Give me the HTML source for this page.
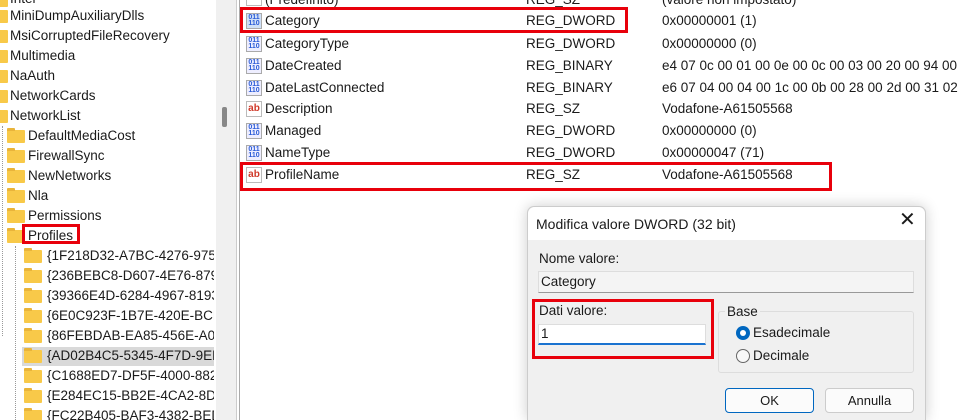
<!DOCTYPE html>
<html><head><style>
*{margin:0;padding:0;box-sizing:border-box}
html,body{width:980px;height:420px;overflow:hidden}
body{background:#fff;font-family:"Liberation Sans",sans-serif;font-size:13px;color:#1a1a1a;position:relative}
.a{position:absolute;white-space:nowrap}
.f{position:absolute;width:18px;height:13px;background:#f8c949;border-radius:1px}
.f:before{content:"";position:absolute;left:0;top:-2px;width:8px;height:3px;background:#e9b43a;border-radius:1px 1px 0 0}
.t{position:absolute;font-size:13.5px;white-space:nowrap;line-height:16px}
.rb{position:absolute;border:3px solid #e8000b;z-index:3}
.ic{position:absolute;width:16px;height:16px;border:1px solid #aaa;background:#eef;font-size:7px;line-height:6px;color:#2a5bd7;font-weight:bold;text-align:center;padding-top:1px}
.ab{position:absolute;width:16px;height:16px;border:1px solid #bbb;background:#fff;color:#d03a2a;font-size:10px;font-weight:bold;line-height:13px;text-align:center}
.sc{z-index:2}
</style></head><body>
<!-- tree pane -->
<div class="f" style="left:-10px;top:-6px"></div><div class="t" style="left:10px;top:-9px">Intel</div>
<div class="f" style="left:-10px;top:10px"></div><div class="t" style="left:10px;top:8px">MiniDumpAuxiliaryDlls</div>
<div class="f" style="left:-10px;top:30px"></div><div class="t" style="left:10px;top:28px">MsiCorruptedFileRecovery</div>
<div class="f" style="left:-10px;top:50px"></div><div class="t" style="left:10px;top:48px">Multimedia</div>
<div class="f" style="left:-10px;top:70px"></div><div class="t" style="left:10px;top:68px">NaAuth</div>
<div class="f" style="left:-10px;top:90px"></div><div class="t" style="left:10px;top:88px">NetworkCards</div>
<div class="f" style="left:-10px;top:110px"></div><div class="t" style="left:10px;top:108px">NetworkList</div>
<div class="a" style="left:2px;top:126px;width:0;height:210px;border-left:1px dotted #999"></div>
<div class="f" style="left:7px;top:130px"></div><div class="t" style="left:28px;top:128px">DefaultMediaCost</div>
<div class="f" style="left:7px;top:150px"></div><div class="t" style="left:28px;top:148px">FirewallSync</div>
<div class="f" style="left:7px;top:170px"></div><div class="t" style="left:28px;top:168px">NewNetworks</div>
<div class="f" style="left:7px;top:190px"></div><div class="t" style="left:28px;top:188px">Nla</div>
<div class="f" style="left:7px;top:210px"></div><div class="t" style="left:28px;top:208px">Permissions</div>
<div class="f" style="left:7px;top:230px"></div><div class="t" style="left:28px;top:228px">Profiles</div>
<div class="rb" style="left:22px;top:224px;width:58px;height:20px"></div>
<div class="a" style="left:15px;top:246px;width:0;height:174px;border-left:1px dotted #999"></div>
<div class="a" style="left:22px;top:347px;width:192px;height:19px;background:#d9d9d9"></div>
<div class="f" style="left:24px;top:250px"></div><div class="t" style="left:47px;top:248px">{1F218D32-A7BC-4276-9759</div>
<div class="f" style="left:24px;top:270px"></div><div class="t" style="left:47px;top:268px">{236BEBC8-D607-4E76-879A</div>
<div class="f" style="left:24px;top:290px"></div><div class="t" style="left:47px;top:288px">{39366E4D-6284-4967-8193</div>
<div class="f" style="left:24px;top:310px"></div><div class="t" style="left:47px;top:308px">{6E0C923F-1B7E-420E-BCD6</div>
<div class="f" style="left:24px;top:330px"></div><div class="t" style="left:47px;top:328px">{86FEBDAB-EA85-456E-A0C</div>
<div class="f" style="left:24px;top:350px"></div><div class="t" style="left:47px;top:348px">{AD02B4C5-5345-4F7D-9EF</div>
<div class="f" style="left:24px;top:370px"></div><div class="t" style="left:47px;top:368px">{C1688ED7-DF5F-4000-8826</div>
<div class="f" style="left:24px;top:390px"></div><div class="t" style="left:47px;top:388px">{E284EC15-BB2E-4CA2-8DC</div>
<div class="f" style="left:24px;top:410px"></div><div class="t" style="left:47px;top:408px">{FC22B405-BAF3-4382-BED</div>

<div class="a sc" style="left:214px;top:0;width:2px;height:420px;background:#fff"></div>
<div class="a sc" style="left:216px;top:0;width:20px;height:420px;background:#f0f0f0"></div>
<div class="a sc" style="left:222px;top:107px;width:5px;height:20px;background:#888;border-radius:2px"></div>
<div class="a sc" style="left:236px;top:0;width:1px;height:420px;background:#ccc"></div>
<div class="a sc" style="left:237px;top:0;width:3px;height:420px;background:#fff"></div>
<div class="a sc" style="left:239px;top:0;width:1px;height:420px;background:#aaa"></div>

<!-- right list -->
<div class="ab" style="left:246px;top:-10px">ab</div><div class="t" style="left:265px;top:-8px">(Predefinito)</div><div class="t" style="left:526px;top:-8px">REG_SZ</div><div class="t" style="left:662px;top:-8px">(valore non impostato)</div>
<div class="ic" style="left:246px;top:13px;background:#cfe0f7">011<br>110</div><div class="t" style="left:265px;top:13px">Category</div><div class="t" style="left:526px;top:13px">REG_DWORD</div><div class="t" style="left:662px;top:13px">0x00000001 (1)</div>
<div class="ic" style="left:246px;top:36px">011<br>110</div><div class="t" style="left:265px;top:36px">CategoryType</div><div class="t" style="left:526px;top:36px">REG_DWORD</div><div class="t" style="left:662px;top:36px">0x00000000 (0)</div>
<div class="ic" style="left:246px;top:58px">011<br>110</div><div class="t" style="left:265px;top:58px">DateCreated</div><div class="t" style="left:526px;top:58px">REG_BINARY</div><div class="t" style="left:662px;top:58px">e4 07 0c 00 01 00 0e 00 0c 00 03 00 20 00 94 00</div>
<div class="ic" style="left:246px;top:80px">011<br>110</div><div class="t" style="left:265px;top:80px">DateLastConnected</div><div class="t" style="left:526px;top:80px">REG_BINARY</div><div class="t" style="left:662px;top:80px">e6 07 04 00 04 00 1c 00 0b 00 28 00 2d 00 31 02</div>
<div class="ab" style="left:246px;top:101px">ab</div><div class="t" style="left:265px;top:101px">Description</div><div class="t" style="left:526px;top:101px">REG_SZ</div><div class="t" style="left:662px;top:101px">Vodafone-A61505568</div>
<div class="ic" style="left:246px;top:123px">011<br>110</div><div class="t" style="left:265px;top:123px">Managed</div><div class="t" style="left:526px;top:123px">REG_DWORD</div><div class="t" style="left:662px;top:123px">0x00000000 (0)</div>
<div class="ic" style="left:246px;top:145px">011<br>110</div><div class="t" style="left:265px;top:145px">NameType</div><div class="t" style="left:526px;top:145px">REG_DWORD</div><div class="t" style="left:662px;top:145px">0x00000047 (71)</div>
<div class="ab" style="left:246px;top:167px">ab</div><div class="t" style="left:265px;top:167px">ProfileName</div><div class="t" style="left:526px;top:167px">REG_SZ</div><div class="t" style="left:662px;top:167px">Vodafone-A61505568</div>
<div class="rb" style="left:240px;top:7px;width:388px;height:26px"></div>
<div class="rb" style="left:240px;top:162px;width:592px;height:29px"></div>

<!-- dialog -->
<div class="a" style="left:527px;top:206px;width:399px;height:214px;background:#f0f0f0;border:1px solid #ccc;border-bottom:none;border-radius:7px 7px 0 0;box-shadow:0 0 14px rgba(0,0,0,.2)"></div>
<div class="a" style="left:528px;top:207px;width:397px;height:33px;background:#fff;border-radius:7px 7px 0 0"></div>
<div class="t" style="left:536px;top:216px;font-size:14px">Modifica valore DWORD (32 bit)</div>
<div class="t" style="left:899px;top:212px;font-size:20px;font-weight:300">✕</div>
<div class="t" style="left:539px;top:251px">Nome valore:</div>
<div class="a" style="left:538px;top:271px;width:376px;height:22px;background:#f4f4f4;border:1px solid #ddd;border-bottom-color:#999"></div>
<div class="t" style="left:541px;top:274px">Category</div>
<div class="t" style="left:539px;top:303px">Dati valore:</div>
<div class="a" style="left:538px;top:324px;width:168px;height:21px;background:#fff;border:1px solid #ddd;border-bottom:2px solid #1a73d0"></div>
<div class="t" style="left:541px;top:326px">1</div>
<div class="rb" style="left:532px;top:299px;width:182px;height:60px"></div>
<div class="a" style="left:718px;top:311px;width:196px;height:62px;border:1px solid #ddd;border-radius:3px"></div>
<div class="t" style="left:725px;top:304px;background:#f0f0f0;padding:0 2px">Base</div>
<div class="a" style="left:736px;top:326px;width:14px;height:14px;border-radius:50%;background:#0067c0"></div>
<div class="a" style="left:740px;top:330px;width:6px;height:6px;border-radius:50%;background:#fff"></div>
<div class="t" style="left:753px;top:325px">Esadecimale</div>
<div class="a" style="left:736px;top:349px;width:14px;height:14px;border-radius:50%;border:1px solid #666;background:#f8f8f8"></div>
<div class="t" style="left:753px;top:348px">Decimale</div>
<div class="a" style="left:725px;top:388px;width:89px;height:25px;background:#fbfbfb;border:1px solid #0067c0;border-radius:4px;text-align:center;line-height:23px">OK</div>
<div class="a" style="left:825px;top:388px;width:89px;height:25px;background:#fbfbfb;border:1px solid #ccc;border-radius:4px;text-align:center;line-height:23px">Annulla</div>
</body></html>
